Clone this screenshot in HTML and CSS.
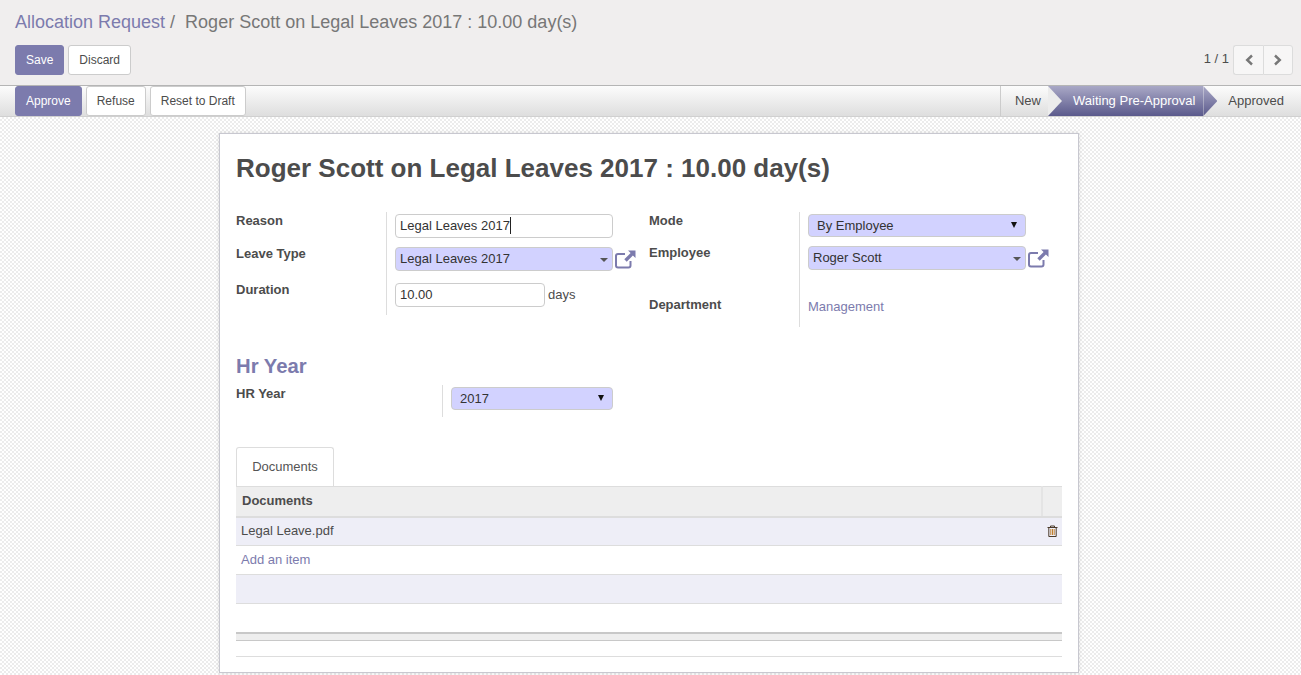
FILE: index.html
```html
<!DOCTYPE html>
<html lang="en">
<head>
  <meta charset="UTF-8" />
  <title>Allocation Request</title>
  <link rel="stylesheet" href="styles.css">
</head>
<body>

<!-- Control panel -->
<div class="controlPanel">
  <ol class="breadcrumb">
    <li><a href="#">Allocation Request</a><span class="crumbSep">/</span></li>
    <li class="crumbActive">Roger Scott on Legal Leaves 2017 : 10.00 day(s)</li>
  </ol>
  <div class="panelRow">
    <div class="btnGroup">
      <button class="btn btnPrimary">Save</button>
      <button class="btn">Discard</button>
    </div>
    <div class="pager">
      <span class="pagerValue">1 / 1</span>
      <div class="pagerBtns">
        <button class="pagerBtn">
          <svg width="10" height="12" viewBox="0 0 10 12"><path d="M8 1.500 3.200 6 8 10.500" fill="none" stroke="#777" stroke-width="2.400"/></svg>
        </button>
        <button class="pagerBtn">
          <svg width="10" height="12" viewBox="0 0 10 12"><path d="M2 1.500 6.800 6 2 10.500" fill="none" stroke="#777" stroke-width="2.400"/></svg>
        </button>
      </div>
    </div>
  </div>
</div>

<!-- Status bar -->
<div class="statusBar">
  <div class="btnGroup">
    <button class="btn btnPrimary">Approve</button>
    <button class="btn">Refuse</button>
    <button class="btn">Reset to Draft</button>
  </div>
  <div class="statusSteps">
    <span class="step stepFirst">New</span>
    <span class="step stepActive">Waiting Pre-Approval</span>
    <span class="step stepLast">Approved</span>
  </div>
</div>

<!-- Form -->
<div class="sheetArea">
  <div class="sheet">
    <h1 class="sheetTitle">Roger Scott on Legal Leaves 2017 : 10.00 day(s)</h1>

    <div class="groupRow">
      <div class="group groupLeft">
        <div class="labels">
          <label class="lblReason">Reason</label>
          <label class="lblType">Leave Type</label>
          <label class="lblDuration">Duration</label>
        </div>
        <div class="fields">
          <div class="field textInput inputCaret">Legal Leaves 2017<span class="caret"></span></div>
          <div class="fieldLine">
            <div class="field comboInput">Legal Leaves 2017<span class="comboArrow"></span></div>
            <svg class="extLink" width="21" height="19" viewBox="0 0 21 19"><use href="#extIcon"/></svg>
          </div>
          <div class="fieldLine durationLine">
            <div class="field textInput durationInput">10.00</div>
            <span class="unit">days</span>
          </div>
        </div>
      </div>

      <div class="group groupRight">
        <div class="labels">
          <label class="lblReason">Mode</label>
          <label class="lblEmployee">Employee</label>
          <label class="lblDept">Department</label>
        </div>
        <div class="fields">
          <div class="field selectInput">By Employee<span class="selectArrow"></span></div>
          <div class="fieldLine employeeLine">
            <div class="field comboInput">Roger Scott<span class="comboArrow"></span></div>
            <svg class="extLink" width="21" height="19" viewBox="0 0 21 19"><use href="#extIcon"/></svg>
          </div>
          <a class="deptLink" href="#">Management</a>
        </div>
      </div>
    </div>

    <h2 class="sectionTitle">Hr Year</h2>
    <div class="group yearGroup">
      <div class="labels yearLabels"><label>HR Year</label></div>
      <div class="fields yearFields">
        <div class="field selectInput">2017<span class="selectArrow"></span></div>
      </div>
    </div>

    <div class="tabs"><span class="tab">Documents</span></div>

    <table class="docTable">
      <thead>
        <tr><th>Documents</th><th class="colDelete"></th></tr>
      </thead>
      <tbody>
        <tr class="rowOdd">
          <td>Legal Leave.pdf</td>
          <td class="colDelete">
            <svg width="11" height="12" viewBox="0 0 11 12"><path d="M.5 2.500h10M3.500 2.500V1h4v1.500M1.800 2.500V11.500h7.400V2.500" fill="none" stroke="#4a3a2a"/><path d="M3.800 4v6M5.500 4v6M7.200 4v6" stroke="#c08030"/></svg>
          </td>
        </tr>
        <tr><td colspan="2"><a href="#">Add an item</a></td></tr>
        <tr class="rowOdd"><td colspan="2">&nbsp;</td></tr>
      </tbody>
    </table>
    <div class="tableFoot"></div>
    <div class="chatter"></div>
  </div>
</div>

<svg class="iconDefs" width="0" height="0">
  <symbol id="extIcon" viewBox="0 0 21 19">
    <path d="M15.500 11v4.500a2 2 0 0 1-2 2H3a2 2 0 0 1-2-2V6a2 2 0 0 1 2-2h7" fill="none" stroke="#7c7bad" stroke-width="2"/>
    <path d="M13 .5h7.500V8l-2.600-2.600-6.200 6.300-2.400-2.400 6.300-6.200z" fill="#7c7bad"/>
  </symbol>
</svg>

</body>
</html>
```

FILE: styles.css
```css
* { margin: 0; padding: 0; box-sizing: border-box; }
html, body { height: 100%; }
body {
  font-family: "Liberation Sans", Arial, sans-serif;
  font-size: 13px;
  line-height: 18px;
  color: #4c4c4c;
  overflow: hidden;
  display: flex;
  flex-direction: column;
}
a { color: #7c7bad; text-decoration: none; }
.iconDefs { position: absolute; }

/* Control panel */
.controlPanel {
  height: 85px;
  flex: none;
  background: #f0eeee;
  padding: 10px 8px 0 15px;
}
.breadcrumb {
  display: flex;
  list-style: none;
  font-size: 18px;
  line-height: 25px;
}
.crumbSep { color: #777; margin: 0 10px 0 5px; }
.crumbActive { color: #777; }
.panelRow {
  display: flex;
  justify-content: space-between;
  margin-top: 10px;
}
.btnGroup { display: flex; gap: 4px; }
.btn {
  height: 30px;
  padding: 0 10px;
  font: 12px/18px "Liberation Sans", Arial, sans-serif;
  color: #4c4c4c;
  background: #fff;
  border: 1px solid #ccc;
  border-radius: 3px;
}
.btnPrimary {
  color: #fff;
  background: #7c7bad;
  border-color: #7c7bad;
}
.pager { display: flex; align-items: center; gap: 4px; height: 30px; }
.pagerValue { font-size: 13px; margin-bottom: 2px; }
.pagerBtns { display: flex; }
.pagerBtn {
  width: 30px;
  height: 30px;
  display: flex;
  align-items: center;
  justify-content: center;
  background: #f7f6f6;
  border: 1px solid #dcdcdc;
}
.pagerBtn:first-child { border-radius: 3px 0 0 3px; border-right: 0; }
.pagerBtn:last-child { border-radius: 0 3px 3px 0; }

/* Status bar */
.statusBar {
  height: 32px;
  flex: none;
  display: flex;
  justify-content: space-between;
  padding-left: 15px;
  border-top: 1px solid #b5b5b5;
  border-bottom: 1px solid #d0d0d0;
  background: linear-gradient(#fcfcfc, #dedede);
}
.statusSteps { display: flex; margin-right: 5px; border-left: 1px solid #ccc; }
.step {
  display: flex;
  align-items: center;
  height: 30px;
  font-size: 13px;
  position: relative;
}
.stepFirst { padding: 0 7px 0 14px; }
.stepActive {
  color: #fff;
  padding: 0 8px 0 25px;
  background: linear-gradient(#a9a8c6, #5b5a8c);
}
.stepFirst::after {
  content: "";
  position: absolute;
  right: -14px;
  top: 0;
  z-index: 1;
  border-style: solid;
  border-width: 15px 0 15px 14px;
  border-color: transparent transparent transparent #ececec;
}
.stepActive::after {
  content: "";
  position: absolute;
  right: -14px;
  top: 0;
  width: 14px;
  height: 30px;
  background: linear-gradient(#a9a8c6, #5b5a8c);
  clip-path: polygon(0 0, 100% 50%, 0 100%);
}
.stepLast { padding: 0 12px 0 25px; }

/* Sheet */
.sheetArea {
  flex: 1;
  min-height: 0;
  padding-top: 16px;
  display: flex;
  justify-content: center;
  background-color: #fff;
  background-image: conic-gradient(#ececec 25%, #fff 0 50%, #ececec 0 75%, #fff 0);
  background-size: 4px 4px;
}
.sheet {
  width: 860px;
  height: 540px;
  background: #fff;
  border: 1px solid #c8c8d0;
  box-shadow: 0 0 4px rgba(0, 0, 0, 0.12);
  padding: 16px 16px 0;
  margin-right: 3px;
}
.sheetTitle {
  font-size: 26px;
  line-height: 36px;
  font-weight: bold;
  color: #4c4c4c;
  margin-bottom: 26px;
}

/* Groups */
.groupRow { display: flex; }
.group { display: flex; }
.groupLeft { width: 413px; height: 103px; }
.groupRight { flex: 1; height: 115px; }
.labels {
  width: 150px;
  flex: none;
  font-weight: bold;
  position: relative;
}
.labels label { display: block; }
.lblReason { padding-top: 0; }
.lblType { margin-top: 15px; }
.lblDuration { margin-top: 18px; }
.lblEmployee { margin-top: 14px; }
.lblDept { margin-top: 34px; }
.fields {
  flex: 1;
  border-left: 1px solid #ddd;
  padding: 2px 0 0 8px;
}
.field {
  height: 24px;
  width: 218px;
  border: 1px solid #ccc;
  border-radius: 4px;
  line-height: 22px;
  padding-left: 4px;
  color: #333;
  position: relative;
}
.fieldLine { display: flex; align-items: center; margin-top: 9px; }
.extLink { margin: 1px 0 0 2px; flex: none; }
.caret {
  display: inline-block;
  width: 1px;
  height: 17px;
  background: #222;
  vertical-align: -4px;
}
.comboInput { background: #d2d2ff; }
.comboArrow {
  position: absolute;
  right: 4px;
  top: 10px;
  border-style: solid;
  border-width: 4px 4px 0;
  border-color: #555 transparent transparent;
}
.selectInput {
  background: #d2d2ff;
  padding-left: 8px;
  height: 23px;
}
.selectArrow {
  position: absolute;
  right: 8px;
  top: 7px;
  border-style: solid;
  border-width: 6px 3.500px 0;
  border-color: #111 transparent transparent;
}
.durationLine { margin-top: 12px; }
.durationInput { width: 150px; }
.unit { margin-left: 3px; }
.employeeLine { margin-top: 9px; }
.deptLink { display: block; margin-top: 28px; }

/* Hr Year */
.sectionTitle {
  font-size: 20.300px;
  line-height: 26px;
  font-weight: bold;
  color: #7c7bad;
  margin-top: 26px;
}
.yearGroup { height: 32px; margin-top: 6px; }
.yearLabels { width: 206px; }
.yearFields { padding-top: 2px; }
.yearFields .field { width: 162px; }

/* Tabs and table */
.tabs {
  display: flex;
  margin-top: 30px;
}
.tab {
  height: 39px;
  padding: 0 15px;
  line-height: 38px;
  background: #fff;
  border: 1px solid #ddd;
  border-bottom: 0;
  border-radius: 3px 3px 0 0;
  color: #555;
  width: 98px;
  text-align: center;
}
.docTable {
  width: 100%;
  border-collapse: collapse;
  table-layout: fixed;
}
.docTable th {
  height: 30px;
  text-align: left;
  padding: 0 6px;
  background: #eee;
  border-top: 1px solid #ddd;
  border-bottom: 2px solid #ddd;
}
.docTable th.colDelete { border-left: 2px solid #e4e4e4; width: 20px; }
.docTable td {
  height: 29px;
  padding: 0 5px;
  border-bottom: 1px solid #ddd;
}
.colDelete { width: 20px; padding: 0 !important; text-align: center; }
.colDelete svg { display: block; margin: 0 auto; }
.rowOdd { background: #eeeef7; }
.tableFoot {
  height: 9px;
  margin-top: 28px;
  background: #eee;
  border-top: 2px solid #c8c8c8;
  border-bottom: 1px solid #c8c8c8;
}
.chatter {
  height: 16px;
  border-bottom: 1px solid #ddd;
}
```
